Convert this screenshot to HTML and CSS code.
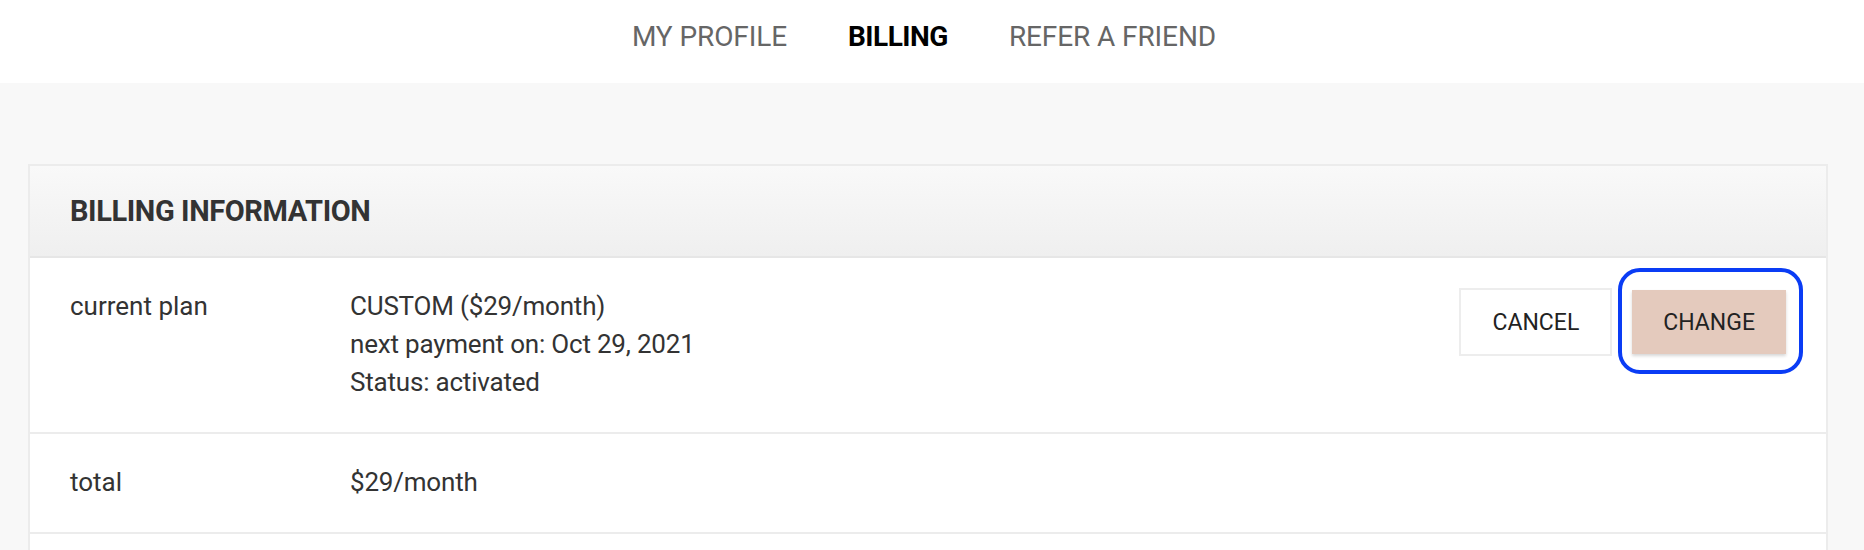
FILE: index.html
```html
<!DOCTYPE html>
<html lang="en">
<head>
<meta charset="utf-8">
<title>Billing</title>
<link rel="stylesheet" href="styles.css">
</head>
<body>
<header class="topnav">
  <nav class="topnav__inner">
    <a class="topnav__link" href="#">MY PROFILE</a>
    <a class="topnav__link topnav__link--active" href="#">BILLING</a>
    <a class="topnav__link" href="#">REFER A FRIEND</a>
  </nav>
</header>
<main class="page">
  <section class="card">
    <div class="card__header">
      <h2 class="card__title">BILLING INFORMATION</h2>
    </div>
    <div class="card__row">
      <div class="card__label">current plan</div>
      <div class="card__value">
        <div>CUSTOM ($29/month)</div>
        <div>next payment on: Oct 29, 2021</div>
        <div>Status: activated</div>
      </div>
      <div class="card__actions">
        <button class="btn btn--outline" type="button">CANCEL</button>
        <button class="btn btn--primary" type="button">CHANGE</button>
      </div>
    </div>
    <div class="card__row">
      <div class="card__label">total</div>
      <div class="card__value">$29/month</div>
    </div>
    <div class="card__row card__row--filler"></div>
  </section>
</main>
</body>
</html>
```
FILE: styles.css
```css
* { box-sizing: border-box; }

body {
  margin: 0;
  background: #f8f8f8;
  font-family: Roboto, "Liberation Sans", Arial, sans-serif;
  color: #333;
}

.topnav {
  background: #fff;
  height: 83px;
}

.topnav__inner {
  margin: 0 40px 0 24px;
  display: flex;
  justify-content: center;
  gap: 61px;
  padding-top: 20px;
}

.topnav__link {
  font-size: 28px;
  line-height: 33px;
  color: #666;
  text-decoration: none;
  letter-spacing: -0.1px;
}

.topnav__link--active {
  color: #000;
  font-weight: 700;
  letter-spacing: -0.5px;
}

.page {
  padding: 81px 36px 0 28px;
}

.card {
  background: #fff;
  border: 2px solid #ececec;
}

.card__header {
  height: 92px;
  display: flex;
  align-items: center;
  padding: 0 40px;
  background: linear-gradient(#f9f9f9, #efefef);
  border-bottom: 2px solid #e6e6e6;
}

.card__title {
  margin: 0;
  font-size: 29px;
  font-weight: 700;
  letter-spacing: -0.4px;
  color: #333;
}

.card__row {
  display: flex;
  align-items: flex-start;
  padding: 29px 40px 31px;
  border-bottom: 2px solid #ececec;
  font-size: 26px;
  line-height: 38px;
}

.card__row--filler {
  height: 100px;
  border-bottom: none;
}

.card__label {
  width: 280px;
  flex-shrink: 0;
}

.card__value {
  flex: 1;
  letter-spacing: -0.2px;
}

.card__actions {
  display: flex;
  align-items: center;
  gap: 20px;
  margin-top: 1px;
}

.btn {
  font-family: Roboto, "Liberation Sans", Arial, sans-serif;
  font-size: 23px;
  color: #222;
  display: inline-flex;
  align-items: center;
  justify-content: center;
  padding: 0 31px;
  border: none;
  margin: 0;
  cursor: pointer;
}

.btn--outline {
  height: 68px;
  background: #fff;
  border: 2px solid #ededed;
  padding: 0 31px;
}

.btn--primary {
  position: relative;
  height: 64px;
  background: #e4cabd;
  box-shadow: 0 2px 3px rgba(0, 0, 0, 0.16);
}

.btn--primary::after {
  content: "";
  position: absolute;
  top: -22px;
  bottom: -20px;
  left: -14px;
  right: -17px;
  border: 4px solid #0a3cf5;
  border-radius: 22px;
  pointer-events: none;
}
```
